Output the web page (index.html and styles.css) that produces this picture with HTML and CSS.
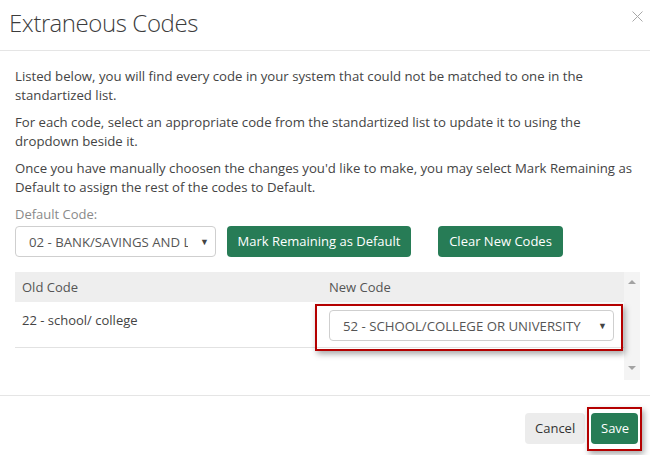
FILE: index.html
```html
<!DOCTYPE html>
<html>
<head>
<meta charset="utf-8">
<link rel="stylesheet" href="styles.css">
</head>
<body>
<div class="modal">
  <div class="modal-header">
    <h1 class="modal-title">Extraneous Codes</h1>
    <span class="close" aria-label="Close">
      <svg width="11" height="11" viewBox="0 0 11 11"><path d="M0.5 0.5 L10.5 10.5 M10.5 0.5 L0.5 10.5" stroke="#a8a8a8" stroke-width="1" fill="none"/></svg>
    </span>
  </div>
  <div class="modal-body">
    <p>Listed below, you will find every code in your system that could not be matched to one in the standartized list.</p>
    <p>For each code, select an appropriate code from the standartized list to update it to using the dropdown beside it.</p>
    <p>Once you have manually choosen the changes you'd like to make, you may select Mark Remaining as Default to assign the rest of the codes to Default.</p>
    <div class="form-label">Default Code:</div>
    <div class="controls">
      <div class="select select-default">
        <span class="select-text clip">02 - BANK/SAVINGS AND L</span>
        <span class="caret">▼</span>
      </div>
      <button class="btn btn-green btn-mark">Mark Remaining as Default</button>
      <button class="btn btn-green btn-clear">Clear New Codes</button>
    </div>
    <div class="table-wrap">
      <div class="table">
        <div class="row head">
          <div class="cell col1">Old Code</div>
          <div class="cell col2">New Code</div>
        </div>
        <div class="row body-row">
          <div class="cell col1">22 - school/ college</div>
          <div class="cell col2">
            <div class="highlight-host">
              <div class="select select-new">
                <span class="select-text">52 - SCHOOL/COLLEGE OR UNIVERSITY</span>
                <span class="caret">▼</span>
              </div>
              <div class="highlight hl-select"></div>
            </div>
          </div>
        </div>
      </div>
      <div class="scrollbar">
        <span class="arrow-up"></span>
        <span class="arrow-down"></span>
      </div>
    </div>
  </div>
  <div class="modal-footer">
    <button class="btn btn-gray">Cancel</button>
    <div class="highlight-host">
      <button class="btn btn-green btn-save">Save</button>
      <div class="highlight hl-save"></div>
    </div>
  </div>
</div>
</body>
</html>
```
FILE: styles.css
```css
html, body {
  margin: 0;
  padding: 0;
  background: #fff;
}
body {
  font-family: "Open Sans", "Liberation Sans", sans-serif;
  font-size: 13px;
  color: #444;
}
.modal {
  width: 650px;
  height: 455px;
  overflow: hidden;
}
.modal-header {
  display: flex;
  justify-content: space-between;
  align-items: flex-start;
  padding: 8px 7px 12px 9px;
  border-bottom: 1px solid #e5e5e5;
}
.modal-title {
  margin: 0;
  font-family: "Open Sans Light", "Open Sans", sans-serif;
  font-size: 24px;
  font-weight: 300;
  letter-spacing: -0.4px;
  line-height: 30px;
  color: #3c3c3c;
}
.close {
  display: block;
  margin-top: 3px;
  line-height: 0;
}
.modal-body {
  padding: 16px 10px 15px 15px;
}
.modal-body p {
  margin: 0 0 8px;
  font-size: 13.2px;
  line-height: 19px;
}
.form-label {
  margin-top: 7px;
  line-height: 19px;
  color: #8a8a8a;
}
.controls {
  display: flex;
  align-items: center;
  margin-top: 2px;
}
.select {
  box-sizing: border-box;
  height: 31px;
  border: 1px solid #cfcfcf;
  border-radius: 4px;
  display: flex;
  align-items: center;
  background: #fff;
  color: #555;
  font-size: 13.2px;
  padding-left: 13px;
}
.select-text {
  white-space: nowrap;
  overflow: hidden;
}
.clip {
  width: 159px;
}
.caret {
  font-size: 9px;
  color: #444;
  margin-left: auto;
  margin-right: 6px;
}
.select-default {
  width: 201px;
}
.btn {
  box-sizing: border-box;
  height: 31px;
  border: none;
  border-radius: 4px;
  font-family: "Open Sans", "Liberation Sans", sans-serif;
  font-size: 13px;
  padding: 0 10px;
  line-height: 31px;
  cursor: pointer;
}
.btn-green {
  background: #277c56;
  color: #fff;
}
.btn-gray {
  background: #ececec;
  color: #333;
}
.btn-mark {
  margin-left: 11px;
  width: 184px;
}
.btn-clear {
  margin-left: 27px;
  width: 125px;
}
.table-wrap {
  display: flex;
  height: 108px;
  margin-top: 15px;
}
.table {
  flex: 1;
}
.row {
  display: flex;
}
.cell {
  box-sizing: border-box;
  padding: 0 7px;
}
.col1 {
  width: 307px;
}
.col2 {
  flex: 1;
}
.head {
  background: #eeeeee;
  height: 30px;
  align-items: center;
  color: #555;
}
.body-row {
  box-sizing: border-box;
  height: 46px;
  padding-top: 8px;
  border-bottom: 1px solid #e2e2e2;
  line-height: 20px;
}
.highlight-host {
  position: relative;
  width: fit-content;
}
.select-new {
  width: 285px;
}
.highlight {
  position: absolute;
  border: 2px solid #b40000;
  box-shadow: 2px 3px 6px rgba(0, 0, 0, 0.35);
  pointer-events: none;
}
.hl-select {
  left: -14px;
  right: -9px;
  top: -6px;
  bottom: -10px;
}
.scrollbar {
  width: 16px;
  background: #f4f4f4;
  display: flex;
  flex-direction: column;
  justify-content: space-between;
  align-items: center;
  padding: 8px 0 10px;
  box-sizing: border-box;
}
.arrow-up {
  width: 0;
  height: 0;
  border-left: 4px solid transparent;
  border-right: 4px solid transparent;
  border-bottom: 4px solid #a3a3a3;
}
.arrow-down {
  width: 0;
  height: 0;
  border-left: 4px solid transparent;
  border-right: 4px solid transparent;
  border-top: 4px solid #a3a3a3;
}
.modal-footer {
  border-top: 1px solid #e5e5e5;
  display: flex;
  justify-content: flex-end;
  align-items: center;
  gap: 6px;
  padding: 17px 12px 11px;
}
.btn-gray {
  width: 60px;
}
.btn-save {
  width: 47px;
  display: block;
}
.hl-save {
  left: -4px;
  right: -4px;
  top: -6px;
  bottom: -7px;
}
```
